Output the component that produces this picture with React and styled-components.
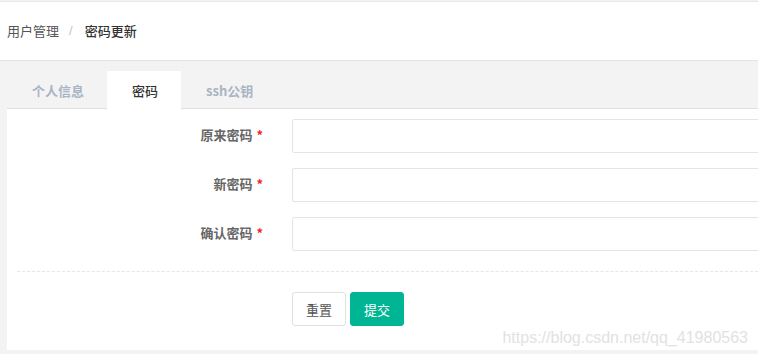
import React from "react";
import styled, { createGlobalStyle } from "styled-components";

const GlobalStyle = createGlobalStyle`
  html, body {
    margin: 0;
    padding: 0;
    background: #f3f3f3;
    font-family: "Liberation Sans", "Noto Sans CJK SC", sans-serif;
    font-size: 13px;
    overflow: hidden;
  }
`;

const tabs = ["个人信息", "密码", "ssh公钥"];
const fields = ["原来密码", "新密码", "确认密码"];

const App = () => {
    return (
        <Page>
            <GlobalStyle/>
            <Header>
                <Crumb>用户管理</Crumb>
                <Sep>/</Sep>
                <Crumb current>密码更新</Crumb>
            </Header>
            <Body>
                <TabBar>
                    {
                        tabs.map((item, index) => {
                            return <Tab key={index} active={index === 1}>{item}</Tab>
                        })
                    }
                </TabBar>
                <Panel>
                    <Fields>
                        {
                            fields.map((item, index) => {
                                return (
                                    <Row key={index}>
                                        <Label>{item}<Star>*</Star></Label>
                                        <Input type="password"/>
                                    </Row>
                                )
                            })
                        }
                    </Fields>
                    <Divider/>
                    <Actions>
                        <Button>重置</Button>
                        <Button primary>提交</Button>
                    </Actions>
                    <Mark>https://blog.csdn.net/qq_41980563</Mark>
                </Panel>
            </Body>
        </Page>
    )
}

const Page = styled.div`
  width: 758px;
  height: 354px;
  background: #f3f3f3;
`;

const Header = styled.div`
  margin-top: 1px;
  height: 60px;
  border-top: 1px solid #e8e8e8;
  border-bottom: 1px solid #e4e4e4;
  background: #fff;
  display: flex;
  align-items: center;
  padding-left: 7px;
  padding-bottom: 1px;
  box-sizing: border-box;
`;

const Crumb = styled.span`
  font-family: "Noto Sans CJK SC", sans-serif;
  font-size: 13px;
  color: ${props => props.current ? "#333" : "#555"};
  font-weight: ${props => props.current ? 500 : 400};
`;

const Sep = styled.span`
  color: #c4c4c4;
  margin: 0 12px 0 10px;
  font-size: 13px;
`;

const Body = styled.div`
  padding: 10px 0 0 7px;
`;

const TabBar = styled.div`
  display: flex;
  height: 37px;
  border-bottom: 1px solid #e0e0e0;
`;

const Tab = styled.div`
  padding: 0 23px 0 25px;
  display: flex;
  align-items: center;
  font-family: "Noto Sans CJK SC", sans-serif;
  font-size: 13px;
  font-weight: ${props => props.active ? 500 : 700};
  color: ${props => props.active ? "#333" : "#a9b5c4"};
  background: ${props => props.active ? "#fff" : "transparent"};
  margin-bottom: -1px;
`;

const Panel = styled.div`
  position: relative;
  background: #fff;
  padding: 10px 0 24px 10px;
  height: 241px;
  box-sizing: border-box;
  overflow: hidden;
`;

const Fields = styled.div`
  display: flex;
  flex-direction: column;
  gap: 15px;
`;

const Row = styled.div`
  display: flex;
  align-items: center;
  gap: 29px;
`;

const Label = styled.label`
  width: 246px;
  flex-shrink: 0;
  text-align: right;
  font-family: "Noto Sans CJK SC", sans-serif;
  font-size: 13px;
  font-weight: 700;
  color: #666;
  margin-top: -3px;
`;

const Star = styled.span`
  color: #f5222d;
  margin-left: 4px;
`;

const Input = styled.input`
  width: 520px;
  height: 34px;
  box-sizing: border-box;
  border: 1px solid #e4e4e4;
  border-radius: 2px;
  flex-shrink: 0;
  outline: none;
`;

const Divider = styled.div`
  margin: 20px 0 20px 0;
  border-top: 1px dashed #e6e6e6;
`;

const Actions = styled.div`
  display: flex;
  gap: 4px;
  padding-left: 275px;
`;

const Button = styled.button`
  width: 54px;
  height: 34px;
  border-radius: 3px;
  border: 1px solid ${props => props.primary ? "#00b594" : "#e0e0e0"};
  background: ${props => props.primary ? "#00b594" : "#fff"};
  color: ${props => props.primary ? "#fff" : "#555"};
  font-family: "Noto Sans CJK SC", sans-serif;
  font-size: 13px;
  padding: 0;
`;

const Mark = styled.div`
  position: absolute;
  right: 10px;
  bottom: 3px;
  font-family: "Liberation Sans", sans-serif;
  font-size: 16px;
  color: #e2e2e2;
  pointer-events: none;
`;

export default App;
